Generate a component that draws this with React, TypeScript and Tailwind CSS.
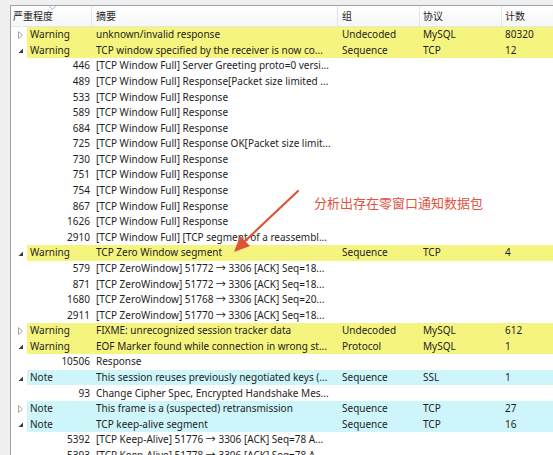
import React from 'react';

type Row =
  | { kind: 'group'; open: boolean; sev: string; summary: string; group: string; proto: string; count: string; tone: 'warn' | 'note' }
  | { kind: 'item'; no: string; summary: string };

const rows: Row[] = [
  { kind: 'group', open: false, sev: 'Warning', summary: 'unknown/invalid response', group: 'Undecoded', proto: 'MySQL', count: '80320', tone: 'warn' },
  { kind: 'group', open: true, sev: 'Warning', summary: 'TCP window specified by the receiver is now co...', group: 'Sequence', proto: 'TCP', count: '12', tone: 'warn' },
  { kind: 'item', no: '446', summary: '[TCP Window Full] Server Greeting proto=0 versi...' },
  { kind: 'item', no: '489', summary: '[TCP Window Full] Response[Packet size limited ...' },
  { kind: 'item', no: '533', summary: '[TCP Window Full] Response' },
  { kind: 'item', no: '589', summary: '[TCP Window Full] Response' },
  { kind: 'item', no: '684', summary: '[TCP Window Full] Response' },
  { kind: 'item', no: '725', summary: '[TCP Window Full] Response OK[Packet size limit...' },
  { kind: 'item', no: '730', summary: '[TCP Window Full] Response' },
  { kind: 'item', no: '751', summary: '[TCP Window Full] Response' },
  { kind: 'item', no: '754', summary: '[TCP Window Full] Response' },
  { kind: 'item', no: '867', summary: '[TCP Window Full] Response' },
  { kind: 'item', no: '1626', summary: '[TCP Window Full] Response' },
  { kind: 'item', no: '2910', summary: '[TCP Window Full] [TCP segment of a reassembl...' },
  { kind: 'group', open: true, sev: 'Warning', summary: 'TCP Zero Window segment', group: 'Sequence', proto: 'TCP', count: '4', tone: 'warn' },
  { kind: 'item', no: '579', summary: '[TCP ZeroWindow] 51772 → 3306 [ACK] Seq=18...' },
  { kind: 'item', no: '871', summary: '[TCP ZeroWindow] 51772 → 3306 [ACK] Seq=18...' },
  { kind: 'item', no: '1680', summary: '[TCP ZeroWindow] 51768 → 3306 [ACK] Seq=20...' },
  { kind: 'item', no: '2911', summary: '[TCP ZeroWindow] 51770 → 3306 [ACK] Seq=18...' },
  { kind: 'group', open: false, sev: 'Warning', summary: 'FIXME: unrecognized session tracker data', group: 'Undecoded', proto: 'MySQL', count: '612', tone: 'warn' },
  { kind: 'group', open: true, sev: 'Warning', summary: 'EOF Marker found while connection in wrong st...', group: 'Protocol', proto: 'MySQL', count: '1', tone: 'warn' },
  { kind: 'item', no: '10506', summary: 'Response' },
  { kind: 'group', open: true, sev: 'Note', summary: 'This session reuses previously negotiated keys (...', group: 'Sequence', proto: 'SSL', count: '1', tone: 'note' },
  { kind: 'item', no: '93', summary: 'Change Cipher Spec, Encrypted Handshake Mes...' },
  { kind: 'group', open: false, sev: 'Note', summary: 'This frame is a (suspected) retransmission', group: 'Sequence', proto: 'TCP', count: '27', tone: 'note' },
  { kind: 'group', open: true, sev: 'Note', summary: 'TCP keep-alive segment', group: 'Sequence', proto: 'TCP', count: '16', tone: 'note' },
  { kind: 'item', no: '5392', summary: '[TCP Keep-Alive] 51776 → 3306 [ACK] Seq=78 A...' },
  { kind: 'item', no: '5393', summary: '[TCP Keep-Alive] 51778 → 3306 [ACK] Seq=78 A...' },
];

function Toggle({ open }: { open: boolean }) {
  if (open) {
    return (
      <svg width="6" height="6" viewBox="0 0 6 6" className="ml-[7px] mt-[2px] shrink-0">
        <polygon points="5,0.5 5,5 0.5,5" fill="#3c3c3c" />
      </svg>
    );
  }
  return (
    <svg width="6" height="8" viewBox="0 0 6 8" className="ml-[7px] shrink-0">
      <polygon points="0.5,0.5 4.5,4 0.5,7.5" fill="none" stroke="#a8a8a8" strokeWidth="1" />
    </svg>
  );
}

function TreeRow({ row }: { row: Row }) {
  if (row.kind === 'item') {
    return (
      <div className="flex h-[15.58px] items-center whitespace-nowrap">
        <div className="w-[16px] shrink-0" />
        <div className="w-[65px] shrink-0 pr-[2px] text-right">{row.no}</div>
        <div className="w-[246px] shrink-0 overflow-hidden pl-[4px]">{row.summary}</div>
      </div>
    );
  }
  const bg = row.tone === 'warn' ? 'bg-[#f5f47f]' : 'bg-[#cdf5fa]';
  return (
    <div className="flex h-[15.58px] items-center whitespace-nowrap">
      <div className="flex h-full w-[16px] shrink-0 items-center">
        <Toggle open={row.open} />
      </div>
      <div className={`flex h-full flex-1 items-center ${bg}`}>
        <div className="w-[65px] shrink-0 pl-[3px]">{row.sev}</div>
        <div className="w-[246px] shrink-0 overflow-hidden pl-[4px]">{row.summary}</div>
        <div className="w-[82px] shrink-0 pl-[4px]">{row.group}</div>
        <div className="w-[82px] shrink-0 pl-[3px]">{row.proto}</div>
        <div className="flex-1 pl-[3px]">{row.count}</div>
      </div>
    </div>
  );
}

export default function App() {
  return (
    <div
      className="relative flex h-[455px] w-[553px] overflow-hidden bg-[#f0f0f0] pl-[10px] pt-[5px] text-[10px] text-[#1e1e1e]"
      style={{ fontFamily: '"Noto Sans", "Noto Sans CJK SC", sans-serif' }}
    >
      <div className="flex flex-1 flex-col overflow-hidden border-l border-t border-[#9ea3ab] bg-white">
        <div className="relative flex h-[21px] shrink-0 items-center border-b border-[#e4e6e9] bg-gradient-to-b from-white to-[#f6f7f8] whitespace-nowrap">
          <div className="flex h-full w-[81px] shrink-0 items-center border-r border-[#e4e6e9] pl-[2px]">严重程度</div>
          <div className="flex h-full w-[246px] shrink-0 items-center border-r border-[#e4e6e9] pl-[4px]">摘要</div>
          <div className="flex h-full w-[82px] shrink-0 items-center border-r border-[#e4e6e9] pl-[4px]">组</div>
          <div className="flex h-full w-[82px] shrink-0 items-center border-r border-[#e4e6e9] pl-[3px]">协议</div>
          <div className="flex h-full flex-1 items-center pl-[3px]">计数</div>
          <svg width="7" height="4" viewBox="0 0 7 4" className="absolute left-[38px] top-0">
            <polyline points="0.5,0.5 3.5,3.2 6.5,0.5" fill="none" stroke="#9fb4cc" strokeWidth="1" />
          </svg>
        </div>
        <div className="flex flex-col">
          {rows.map((r, i) => (
            <TreeRow key={i} row={r} />
          ))}
        </div>
      </div>

      <div className="absolute left-[314px] top-[194px] text-[13px] leading-[18px] text-[#e0533f] whitespace-nowrap">
        分析出存在零窗口通知数据包
      </div>
      <svg width="553" height="455" className="pointer-events-none absolute left-0 top-0">
        <line x1="298" y1="191" x2="243" y2="243" stroke="#dc5536" strokeWidth="2.2" strokeLinecap="round" />
        <polygon points="234,252 240,236 250,246" fill="#dc5536" />
      </svg>
    </div>
  );
}
